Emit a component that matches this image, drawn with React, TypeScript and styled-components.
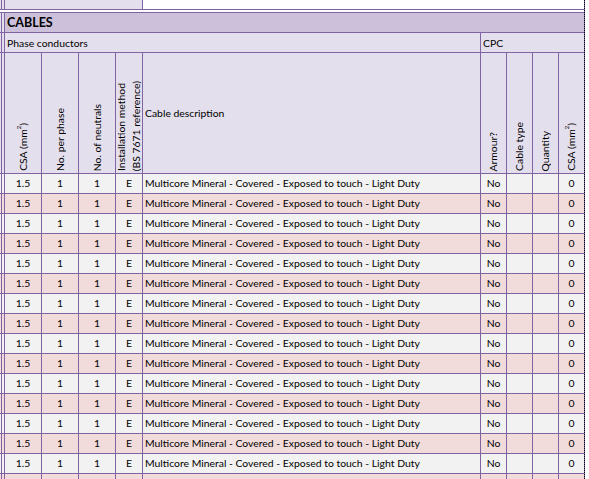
import React from 'react';
import styled, { createGlobalStyle } from 'styled-components';

const LINE = '#8064a2';
const BAND = '#ccc0da';
const LAV = '#e4dfec';
const PINK = '#f2dcdb';
const GREY = '#f2f2f2';
const FONT = `Lato, "Open Sans", "Liberation Sans", sans-serif`;

const Global = createGlobalStyle`
  html, body { margin: 0; padding: 0; background: #fff; overflow: hidden; }
  body { font-family: ${FONT}; }
`;

const Sheet = styled.div`
  display: grid;
  grid-template-columns: 1px 2px 36px 36px 36px 26px 337px 25px 25px 25px 25px;
  grid-template-rows: 9px 2px 19px 19px 120px repeat(16, 19px);
  gap: 1px;
  background: ${LINE};
  width: 584px;
  border-right: 1px dotted #000;
  font-family: ${FONT};
  font-size: 10.4px;
  color: #000;
`;

const Cell = styled.div<{ $bg?: string; $col?: string }>`
  background: ${(p) => p.$bg ?? '#fff'};
  grid-column: ${(p) => p.$col ?? 'auto'};
  overflow: hidden;
  white-space: nowrap;
  display: flex;
  align-items: center;
`;

const Title = styled(Cell)`
  font-size: 12.5px;
  font-weight: 700;
  padding-left: 2px;
`;

const Label = styled(Cell)`
  padding-left: 2px;
`;

const VHead = styled(Cell)`
  align-items: flex-end;
  justify-content: center;
  padding-bottom: 2px;
  box-sizing: border-box;
  gap: 2px;
`;

const VText = styled.span`
  writing-mode: vertical-rl;
  transform: rotate(180deg);
  line-height: 13px;
`;

const Sup = styled.sup`
  font-size: 6px;
  line-height: 0;
`;

const Num = styled(Cell)`
  justify-content: center;
  padding-bottom: 1px;
  box-sizing: border-box;
`;

const Desc = styled(Cell)`
  padding-left: 2px;
  padding-bottom: 1px;
  box-sizing: border-box;
`;

const headers: (React.ReactNode[])[] = [
  [<>CSA (mm<Sup>2</Sup>)</>],
  ['No. per phase'],
  ['No. of neutrals'],
  ['Installation method', '(BS 7671 reference)'],
];

const cpcHeaders: React.ReactNode[] = [
  'Armour?',
  'Cable type',
  'Quantity',
  <>CSA (mm<Sup>2</Sup>)</>,
];

const rows = Array.from({ length: 16 }, (_, i) => i);

export default function App() {
  return (
    <>
      <Global />
      <Sheet>
        {/* top remnant of previous section */}
        <Cell $bg={LAV} />
        <Cell $bg={LAV} />
        <Cell $bg={LAV} $col="3 / 7" />
        <Cell $bg="#fff" $col="7 / 12" />
        <Cell $bg="#fff" $col="1 / -1" />

        {/* section title */}
        <Cell $bg={LAV} />
        <Cell $bg={LAV} />
        <Title $bg={BAND} $col="3 / -1">CABLES</Title>

        {/* group labels */}
        <Cell $bg={LAV} />
        <Cell $bg={LAV} />
        <Label $bg={LAV} $col="3 / 8">Phase conductors</Label>
        <Label $bg={LAV} $col="8 / 12">CPC</Label>

        {/* column headers */}
        <Cell $bg={LAV} />
        <Cell $bg={LAV} />
        {headers.map((lines, i) => (
          <VHead key={i} $bg={LAV}>
            {lines.map((l, j) => (
              <VText key={j}>{l}</VText>
            ))}
          </VHead>
        ))}
        <Desc $bg={LAV}>Cable description</Desc>
        {cpcHeaders.map((h, i) => (
          <VHead key={`c${i}`} $bg={LAV}>
            <VText>{h}</VText>
          </VHead>
        ))}

        {rows.map((i) => {
          const bg = i % 2 === 0 ? GREY : PINK;
          const last = i === 15;
          return (
            <React.Fragment key={i}>
              <Cell $bg={bg} />
              <Cell $bg={bg} />
              <Num $bg={bg}>{last ? '' : '1.5'}</Num>
              <Num $bg={bg}>{last ? '' : '1'}</Num>
              <Num $bg={bg}>{last ? '' : '1'}</Num>
              <Num $bg={bg}>{last ? '' : 'E'}</Num>
              <Desc $bg={bg}>
                {last ? '' : 'Multicore Mineral - Covered - Exposed to touch - Light Duty'}
              </Desc>
              <Num $bg={bg}>{last ? '' : 'No'}</Num>
              <Num $bg={bg} />
              <Num $bg={bg} />
              <Num $bg={bg}>{last ? '' : '0'}</Num>
            </React.Fragment>
          );
        })}
      </Sheet>
    </>
  );
}
